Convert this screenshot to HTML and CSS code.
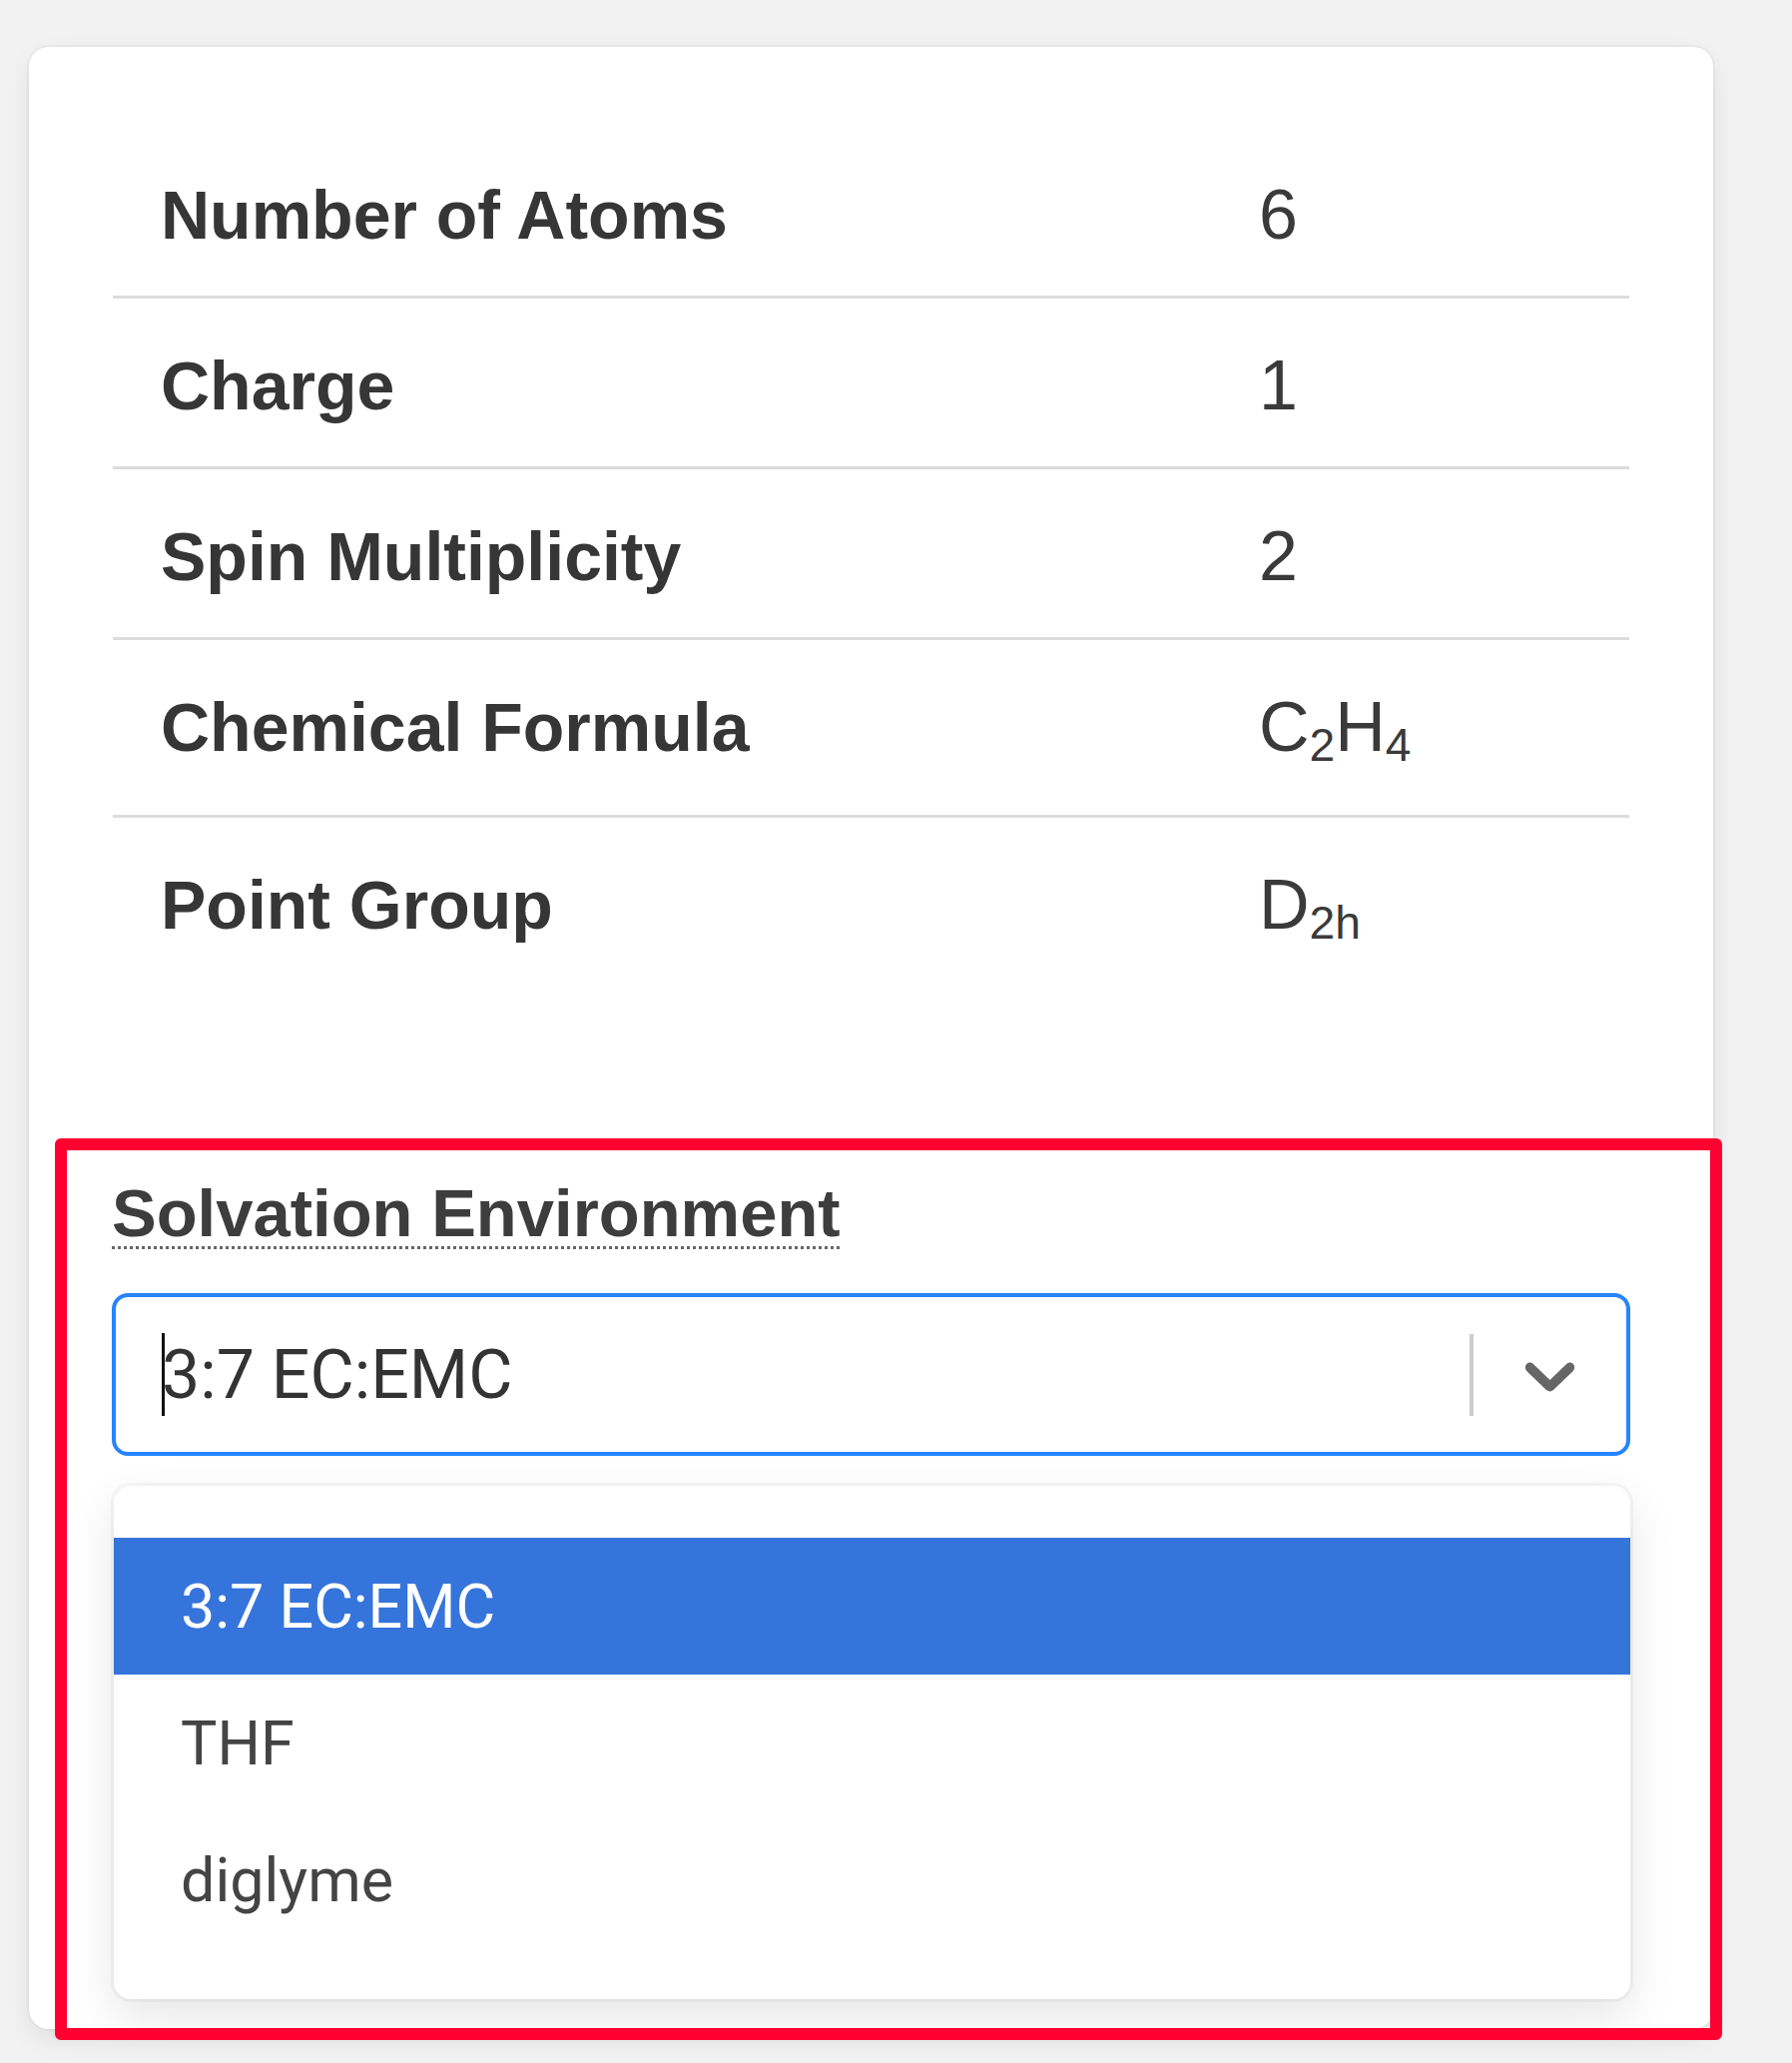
FILE: index.html
```html
<!DOCTYPE html>
<html>
<head>
<meta charset="utf-8">
<title>Molecule properties</title>
<link rel="stylesheet" href="styles.css">
</head>
<body>
<div class="card">
  <div class="props">
    <div class="row"><div class="key">Number of Atoms</div><div class="val">6</div></div>
    <div class="row"><div class="key">Charge</div><div class="val">1</div></div>
    <div class="row"><div class="key">Spin Multiplicity</div><div class="val">2</div></div>
    <div class="row sub-row"><div class="key">Chemical Formula</div><div class="val">C<sub>2</sub>H<sub>4</sub></div></div>
    <div class="row sub-row last"><div class="key">Point Group</div><div class="val">D<sub>2h</sub></div></div>
  </div>
  <div class="field">
    <label class="label"><span class="tip">Solvation Environment</span></label>
    <div class="select">
      <div class="value"><span class="caret"></span><span class="single">3:7 EC:EMC</span></div>
      <div class="indicators">
        <span class="sep"></span>
        <span class="chev">
          <svg width="85" height="85" viewBox="0 0 20 20" aria-hidden="true"><path fill="#666" d="M4.516 7.548c0.436-0.446 1.043-0.481 1.576 0l3.908 3.747 3.908-3.747c0.533-0.481 1.141-0.446 1.574 0 0.436 0.445 0.408 1.197 0 1.615-0.406 0.418-4.695 4.502-4.695 4.502-0.217 0.223-0.502 0.335-0.787 0.335s-0.57-0.112-0.789-0.335c0 0-4.287-4.084-4.695-4.502s-0.436-1.170 0-1.615z"/></svg>
        </span>
      </div>
    </div>
    <div class="menu">
      <div class="opt selected">3:7 EC:EMC</div>
      <div class="opt">THF</div>
      <div class="opt">diglyme</div>
    </div>
    <div class="highlight"></div>
  </div>
</div>
</body>
</html>
```

FILE: styles.css
```css
html, body {
  margin: 0;
  padding: 0;
}
body {
  background: #f2f2f2;
  font-family: "Liberation Sans", Arial, sans-serif;
  min-height: 2066px;
}
.card {
  margin: 47px 0 0 29px;
  width: 1687px;
  box-sizing: border-box;
  background: #fff;
  border-radius: 20px;
  padding: 81px 83px 30px;
  box-shadow: 0 10px 30px -6px rgba(10, 10, 10, 0.12), 0 0 0 2px rgba(10, 10, 10, 0.03);
}
.props {
  margin: 0 1px;
}
.row {
  display: flex;
  align-items: baseline;
  padding: 36px 0 30px 48px;
  border-bottom: 3px solid #dcdcdc;
  line-height: 102px;
  height: 102px;
}
.row.sub-row {
  padding-bottom: 37px;
}
.row.last {
  border-bottom: 0;
}
.key {
  width: 1100px;
  font-family: "Liberation Sans", Arial, sans-serif;
  font-weight: 700;
  font-size: 68px;
  color: #363636;
}
.val {
  font-family: "Liberation Sans", Arial, sans-serif;
  font-weight: 400;
  font-size: 70px;
  color: #3a3a3a;
}
.val sub {
  font-size: 0.66em;
  vertical-align: -10px;
  line-height: 0;
}
.field {
  position: relative;
  margin-top: 171px;
}
.label {
  display: block;
  font-family: "Liberation Sans", Arial, sans-serif;
  font-weight: 700;
  font-size: 67px;
  line-height: 100px;
  color: #3d3d3d;
  margin-bottom: 30px;
}
.tip {
  text-decoration: underline dotted #666;
  text-decoration-thickness: 3px;
  text-underline-offset: 10px;
}
.select {
  display: flex;
  align-items: center;
  height: 163px;
  box-sizing: border-box;
  border: 4px solid #2684ff;
  border-radius: 16px;
  background: #fff;
}
.value {
  flex: 1;
  display: flex;
  align-items: center;
  padding-left: 46px;
  font-family: Roboto, "Liberation Sans", sans-serif;
  font-size: 68px;
  color: #333;
}
.caret {
  width: 3px;
  height: 83px;
  background: #111;
  margin-right: -3px;
}
.indicators {
  display: flex;
  align-items: center;
}
.sep {
  width: 4px;
  height: 82px;
  background: #ccc;
}
.chev {
  display: flex;
  padding: 0 34px;
}
.menu {
  margin: 30px 0 0 2px;
  background: #fff;
  border-radius: 17px;
  padding: 52px 0 51px;
  box-shadow: 0 0 0 3px rgba(0, 0, 0, 0.035), 0 17px 47px rgba(0, 0, 0, 0.1);
}
.opt {
  height: 137px;
  display: flex;
  align-items: center;
  padding-left: 67px;
  font-family: Roboto, "Liberation Sans", sans-serif;
  font-size: 61px;
  color: #444;
}
.opt.selected {
  background: #3574db;
  color: #fff;
}
.highlight {
  position: absolute;
  left: -57px;
  top: -25px;
  right: -92px;
  bottom: -41px;
  border: 12px solid #ff0030;
  border-radius: 6px;
  pointer-events: none;
}
```
